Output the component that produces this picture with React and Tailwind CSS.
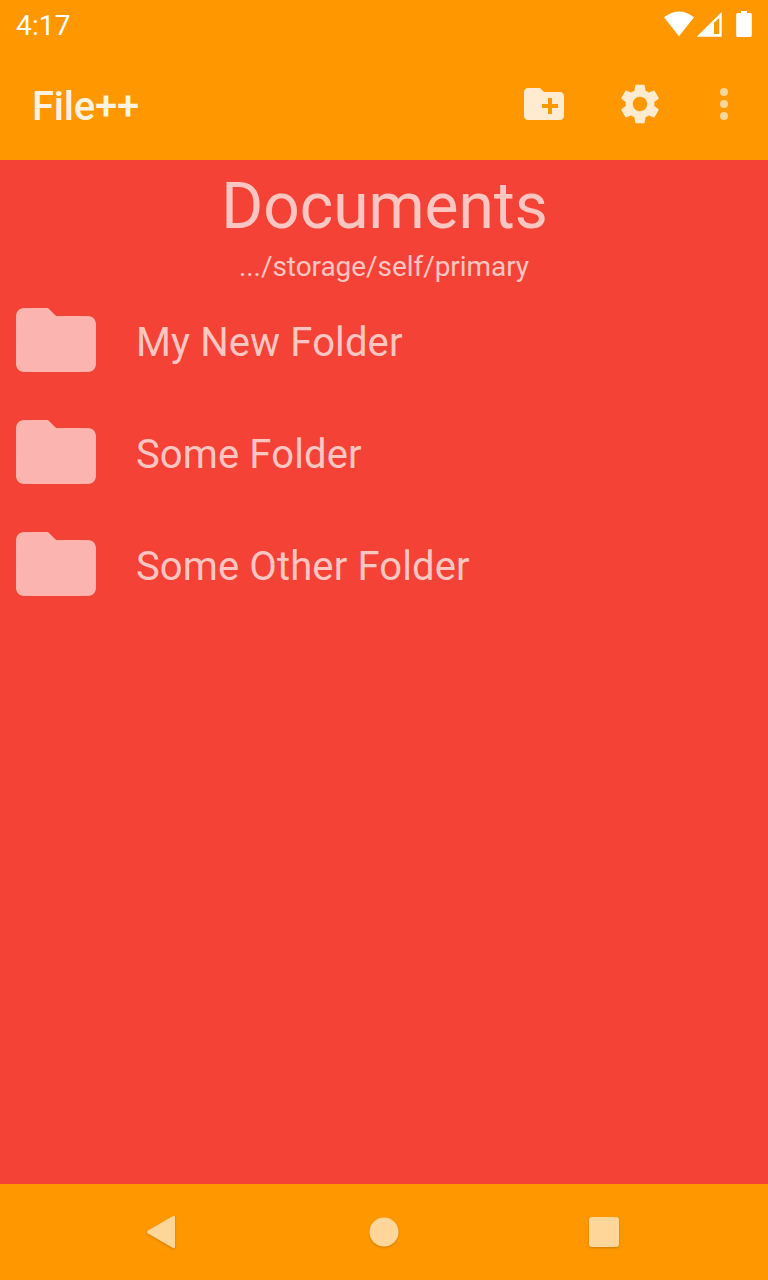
import React from "react";

const folders = ["My New Folder", "Some Folder", "Some Other Folder"];

function StatusBar() {
  return (
    <div className="flex h-12 justify-between pl-4 pr-4 text-white">
      <span className="pt-[10px] text-[28px] leading-8 tracking-[0.15px]">4:17</span>
      <svg className="h-12 w-[88px]" viewBox="664 0 88 48" fill="currentColor">
        <path d="M664 17.3Q679 5.700 694 17.3L679 36.300Z" />
        <path fillRule="evenodd" d="M721.700 12V36.700H696.700ZM719.200 18L714 22.800V34H719.200Z" />
        <path d="M741 11h6v2h3.200q1.600 0 1.600 1.600v20.800q0 1.600-1.600 1.600h-12.400q-1.600 0-1.600-1.600v-20.800q0-1.600 1.600-1.600h3.200z" />
      </svg>
    </div>
  );
}

function AppBar() {
  return (
    <header className="flex h-28 items-center justify-between pl-8 pr-5">
      <h1 className="pt-[6px] text-[40px] font-medium leading-[48px] tracking-[-0.2px] text-[#fff3e0]">File++</h1>
      <div className="flex items-center text-[#ffebcf]">
        <button className="mr-12" aria-label="New folder">
          <svg className="size-12" viewBox="0 0 24 24" fill="currentColor">
            <path d="M20 6h-8l-2-2H4c-1.110 0-1.990.890-1.990 2L2 18c0 1.110.890 2 2 2h16c1.110 0 2-.890 2-2V8c0-1.110-.890-2-2-2zm-1 8h-3v3h-2v-3h-3v-2h3V9h2v3h3v2z" />
          </svg>
        </button>
        <button className="mr-9" aria-label="Settings">
          <svg className="size-12" viewBox="0 0 24 24" fill="currentColor">
            <path d="M19.140 12.940c.040-.300.060-.610.060-.940 0-.320-.020-.640-.070-.940l2.030-1.580c.180-.140.230-.410.120-.610l-1.920-3.320c-.120-.220-.370-.290-.590-.220l-2.390.960c-.500-.380-1.030-.700-1.620-.940l-.360-2.540c-.040-.240-.240-.410-.480-.410h-3.840c-.240 0-.430.170-.470.410l-.360 2.540c-.590.240-1.130.570-1.620.940l-2.390-.960c-.220-.080-.470 0-.590.220L2.740 8.870c-.120.210-.080.470.120.610l2.030 1.580c-.050.300-.090.630-.090.940s.020.640.070.940l-2.030 1.580c-.180.140-.230.410-.120.610l1.920 3.320c.120.220.370.290.590.220l2.390-.960c.500.380 1.030.700 1.620.940l.360 2.540c.050.240.240.410.480.410h3.840c.240 0 .440-.170.470-.410l.360-2.540c.590-.240 1.130-.560 1.620-.940l2.390.960c.220.080.470 0 .590-.220l1.920-3.320c.120-.220.070-.470-.120-.610l-2.010-1.580zM12 15.600c-1.980 0-3.600-1.620-3.600-3.600s1.620-3.600 3.600-3.600 3.600 1.620 3.600 3.600-1.620 3.600-3.600 3.600z" />
          </svg>
        </button>
        <button className="text-[#ffd699]" aria-label="More options">
          <svg className="size-12" viewBox="0 0 24 24" fill="currentColor">
            <circle cx="12" cy="6" r="2" />
            <circle cx="12" cy="12" r="2" />
            <circle cx="12" cy="18" r="2" />
          </svg>
        </button>
      </div>
    </header>
  );
}

function FolderRow({ name }) {
  return (
    <li className="flex h-28 items-start pl-2">
      <svg className="size-24 shrink-0 text-[#fbb4af]" viewBox="0 0 24 24" fill="currentColor">
        <path d="M10 4H4c-1.100 0-1.990.900-1.990 2L2 18c0 1.100.900 2 2 2h16c1.100 0 2-.900 2-2V8c0-1.100-.900-2-2-2h-8l-2-2z" />
      </svg>
      <span className="pl-8 pt-[27px] text-[40px] leading-[48px] tracking-[0.12px]">{name}</span>
    </li>
  );
}

function NavigationBar() {
  return (
    <nav className="flex h-24 items-center bg-[#ff9800] pl-[136px] text-[#ffd699]">
      <svg className="size-12 drop-shadow-[0_1px_1px_rgba(0,0,0,0.2)]" viewBox="0 0 48 48" fill="currentColor">
        <path d="M37 8Q39 7 39 9.500V38.500Q39 41 37 40L12 25.400Q10 24 12 22.600Z" />
      </svg>
      <svg className="ml-44 size-12 drop-shadow-[0_1px_1px_rgba(0,0,0,0.2)]" viewBox="0 0 48 48" fill="currentColor">
        <circle cx="24" cy="24" r="14.500" />
      </svg>
      <svg className="ml-[172px] size-12 drop-shadow-[0_1px_1px_rgba(0,0,0,0.2)]" viewBox="0 0 48 48" fill="currentColor">
        <rect x="9" y="9" width="30" height="30" rx="3" />
      </svg>
    </nav>
  );
}

export default function App() {
  return (
    <div className="flex h-screen w-full flex-col overflow-hidden bg-[#f44336] font-[Roboto,sans-serif] text-[#fdc6c2]">
      <div className="bg-[#ff9800]">
        <StatusBar />
        <AppBar />
      </div>
      <main className="flex-1">
        <div className="flex h-[132px] flex-col items-center">
          <h2 className="pl-px pt-[9px] text-[64px] leading-[76px]">Documents</h2>
          <p className="pt-[6px] text-[28px] leading-8 tracking-[-0.06px]">.../storage/self/primary</p>
        </div>
        <ul>
          {folders.map((name) => (
            <FolderRow key={name} name={name} />
          ))}
        </ul>
      </main>
      <NavigationBar />
    </div>
  );
}
